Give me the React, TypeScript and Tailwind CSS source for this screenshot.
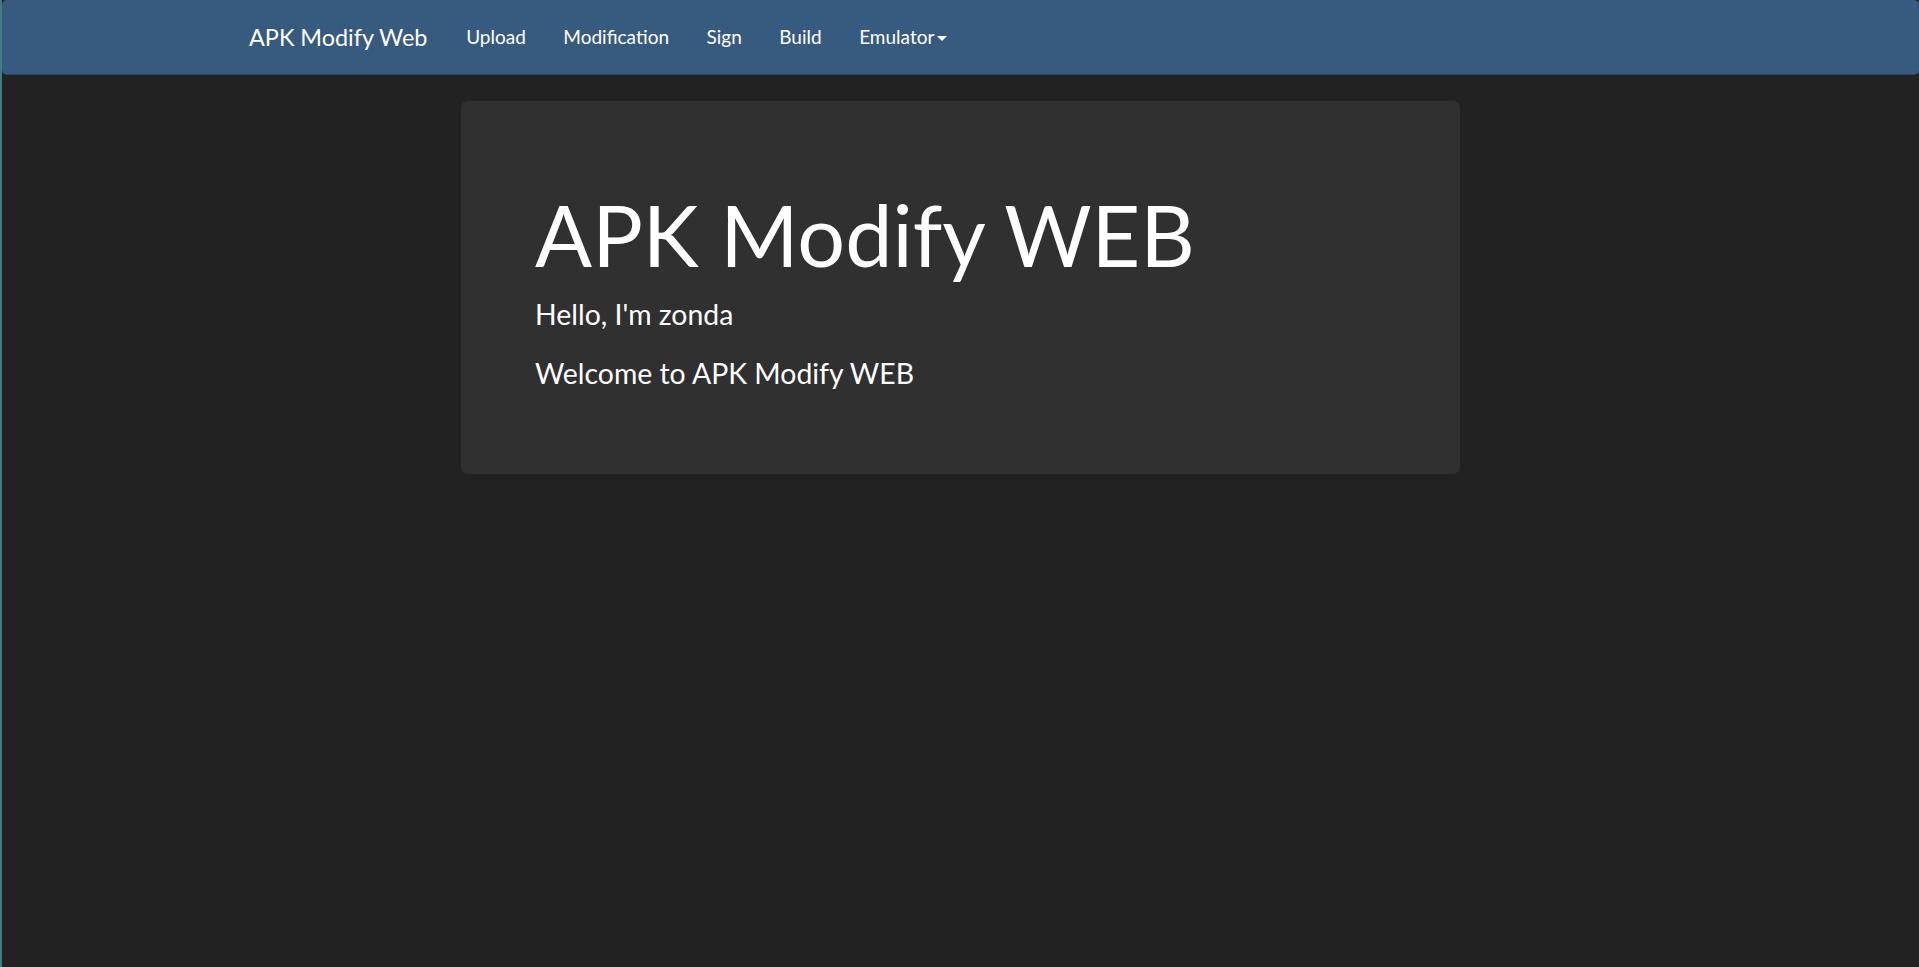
import React from 'react';

const links = ['Upload', 'Modification', 'Sign', 'Build'];

const App: React.FC = () => {
  return (
    <div className="flex min-h-screen bg-[#222222] font-['Lato','Liberation_Sans',sans-serif] text-white">
      {/* thin strip on the left edge */}
      <div className="w-[2px] shrink-0 bg-[#3f7d80]" />

      <div className="flex-1">
        {/* Navbar */}
        <nav className="flex h-[75px] items-center rounded-[5px] border-b border-[#2c4560] bg-[#375a7f] pl-[228px]">
          <a className="pl-[19px] pr-[20px] text-[23.4px] leading-[74px] text-white">APK Modify Web</a>
          {links.map((l) => (
            <a key={l} className="px-[18.75px] text-[19px] leading-[74px] text-white">
              {l}
            </a>
          ))}
          <a className="flex items-center px-[18.75px] text-[19px] leading-[74px] text-white">
            Emulator
            <span className="ml-[3px] mt-[2px] h-0 w-0 border-x-[5px] border-t-[5px] border-x-transparent border-t-white" />
          </a>
        </nav>

        {/* Jumbotron */}
        <div className="mx-auto mt-[26px] w-[999px] rounded-[7px] bg-[#303030] pb-[62px] pl-[74px] pr-[75px] pt-[60px]">
          <h1 className="mb-[12.5px] mt-[28px] text-[84.4px] font-normal leading-[1.1]">APK Modify WEB</h1>
          <p className="mb-[18.75px] text-[28.4px] leading-[40px]">Hello, I'm zonda</p>
          <p className="mb-[18.75px] text-[28.4px] leading-[40px]">Welcome to APK Modify WEB</p>
        </div>
      </div>
    </div>
  );
};

export default App;
